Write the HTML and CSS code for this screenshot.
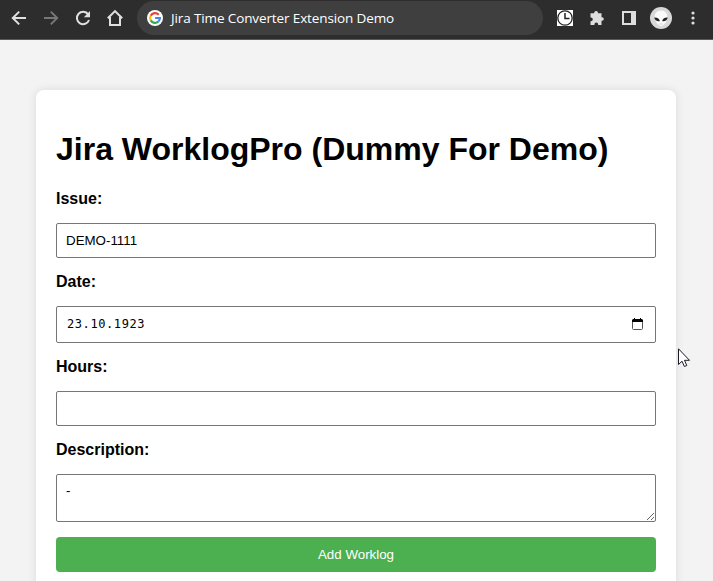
FILE: index.html
```html
<!DOCTYPE html>
<html lang="en">
<head>
<meta charset="utf-8">
<title>Jira Time Converter Extension Demo</title>
<link rel="stylesheet" href="styles.css">
</head>
<body>
<header class="toolbar">
  <nav class="nav">
    <svg width="16" height="16" viewBox="0 0 16 16" class="line"><path d="M15 8H2M8.2 1.6 1.8 8l6.4 6.4"/></svg>
    <svg width="16" height="16" viewBox="0 0 16 16" class="line dim"><path d="M1 8h13M7.8 1.6 14.2 8l-6.4 6.4"/></svg>
    <svg width="16" height="16" viewBox="0 0 16 16" class="line"><path d="M13.2 4.4A6.2 6.2 0 1 0 14 10"/><path class="solid" d="M15 1v6.2H8.8z"/></svg>
    <svg width="16" height="18" viewBox="0 0 16 18" class="line"><path d="M.8 9.3 8 2.1l7.2 7.2M3 8v8h10V8"/></svg>
  </nav>
  <div class="omnibox">
    <svg width="16" height="16" viewBox="0 0 16 16">
      <circle cx="8" cy="8" r="8" fill="#fff"/>
      <g fill="none" stroke-width="2.2">
        <path d="M11.7 4.7A4.9 4.9 0 0 0 3.7 5.7" stroke="#ea4335"/>
        <path d="M3.7 5.7a4.9 4.9 0 0 0 0 4.7" stroke="#fbbc05"/>
        <path d="M3.7 10.4a4.9 4.9 0 0 0 7.7 1.1" stroke="#34a853"/>
        <path d="M11.4 11.5A4.9 4.9 0 0 0 12.9 8H8.1" stroke="#4285f4"/>
      </g>
    </svg>
    <span class="url">Jira Time Converter Extension Demo</span>
  </div>
  <div class="tools">
    <svg class="clock" width="16" height="16" viewBox="0 0 16 16"><path fill="#fff" d="M0 0h16v16H0z"/><circle cx="8" cy="8" r="7.2" fill="#fff" stroke="#222" stroke-width="1.3"/><path d="M8 3v5.5h4.5" fill="none" stroke="#222" stroke-width="1.5"/></svg>
    <svg class="puzzle" width="16" height="16" viewBox="0 0 16 16"><path fill="#dedede" d="M1.500 3.200h3.700v-.4a1.900 1.900 0 0 1 3.800 0v.4h3.500v4h.5a1.800 1.800 0 0 1 0 3.600h-.5V15H9.200v-.6a1.900 1.900 0 0 0-3.800 0v.6H1.500v-3.800h.4a1.900 1.900 0 0 0 0-3.800h-.4z"/></svg>
    <svg class="panel" width="14" height="14" viewBox="0 0 14 14"><path fill="#dedede" fill-rule="evenodd" d="M0 0h14v14H0zM2 2v10h7V2z"/></svg>
    <svg class="avatar" width="22" height="22" viewBox="0 0 22 22"><circle cx="11" cy="11" r="11" fill="#d8d8d8"/><path fill="#fafafa" d="M11 3.500c4.300 0 6.500 3 6.300 7-.2 4-3.600 8.500-6.300 8.500s-6.100-4.500-6.300-8.500c-.2-4 2-7 6.300-7z"/><path fill="#222" d="M4.300 10.500c3-.2 5.400 1.200 5.500 3.700-3 .5-5.200-1.100-5.500-3.700zM17.700 10.500c-3-.2-5.400 1.200-5.500 3.700 3 .5 5.200-1.100 5.500-3.700z"/><path d="M9.500 17h3" stroke="#bbb" stroke-width=".7"/></svg>
    <svg class="more" width="4" height="14" viewBox="0 0 4 14" fill="#dedede"><circle cx="2" cy="2" r="1.600"/><circle cx="2" cy="7" r="1.600"/><circle cx="2" cy="12" r="1.600"/></svg>
  </div>
</header>
<main class="card">
  <h1>Jira WorklogPro (Dummy For Demo)</h1>
  <form class="form">
    <label for="issue">Issue:</label>
    <input id="issue" class="field" type="text" value="DEMO-1111">
    <label>Date:</label>
    <div class="field date">
      <span>23.10.1923</span>
      <svg width="11" height="12" viewBox="0 0 11 12"><path d="M.5 2v8.500a1 1 0 0 0 1 1h8a1 1 0 0 0 1-1V2" fill="none" stroke="#555"/><path d="M0 4V2l1-1h1V0h1v1h5V0h1v1h1l1 1v2z"/></svg>
    </div>
    <label for="hours">Hours:</label>
    <input id="hours" class="field" type="text">
    <label for="description">Description:</label>
    <textarea id="description" class="field area">-</textarea>
    <button class="submit" type="button">Add Worklog</button>
  </form>
</main>
<svg class="cursor" width="13" height="20" viewBox="0 0 13 20"><path d="M.5.800v15.700l3.500-3.300 2.400 5.300 2.400-1-2.300-5.200h5z" fill="#fff" stroke="#1a1a28"/></svg>
</body>
</html>
```
FILE: styles.css
```css
* { box-sizing: border-box; }

body {
  margin: 0;
  height: 581px;
  overflow: hidden;
  background: #f3f3f3;
  color: #000;
  font-family: "Liberation Sans", Arial, sans-serif;
}

.toolbar {
  display: flex;
  height: 40px;
  padding: 1px 0 4px 11px;
  background: #2d2d2d;
  border-bottom: 1px solid #595959;
}

.nav {
  display: flex;
  align-items: center;
  gap: 16px;
  width: 126px;
}

.line { fill: none; stroke: #e0e0e0; stroke-width: 2; }
.dim { stroke: #777; }
.solid { fill: #e0e0e0; stroke: none; }

.omnibox {
  display: flex;
  align-items: center;
  gap: 8px;
  width: 406px;
  height: 34px;
  padding-left: 10px;
  border-radius: 17px;
  background: #3f3f3f;
}

.url {
  color: #fff;
  font: 13.5px/20px "Open Sans", "Noto Sans", sans-serif;
  letter-spacing: -0.12px;
}

.tools {
  display: flex;
  align-items: center;
  padding-left: 14px;
}

.puzzle { margin-left: 16px; }
.panel { margin-left: 17px; }
.avatar { margin-left: 14px; }
.more { margin-left: 19px; }

.card {
  width: 640px;
  height: 520px;
  margin: 50px 0 0 36px;
  padding: 20px;
  border-radius: 8px;
  background: #fff;
  box-shadow: 0 0 10px rgba(0, 0, 0, 0.1);
}

h1 {
  margin: 21.44px 0;
  font-size: 32px;
  line-height: 37px;
}

.form {
  display: flex;
  flex-direction: column;
  gap: 15px;
}

label {
  font-size: 16px;
  font-weight: bold;
  line-height: 18px;
}

.field {
  width: 100%;
  height: 35px;
  margin: 0;
  padding: 8px 9px;
  border: 1px solid #767676;
  border-radius: 2px;
  background: #fff;
  color: #000;
  font: 13.333px "Liberation Sans", Arial, sans-serif;
}

.date {
  display: flex;
  align-items: center;
  justify-content: space-between;
  height: 37px;
  padding: 0 12px 0 10px;
  font: 12px "DejaVu Sans Mono", monospace;
  letter-spacing: 0.58px;
}

.area {
  height: 48px;
  resize: vertical;
}

.submit {
  height: 35px;
  padding: 0;
  border: 0;
  border-radius: 4px;
  background: #4caf50;
  color: #fff;
  font: 13.333px "Liberation Sans", Arial, sans-serif;
}

.cursor {
  position: absolute;
  left: 678px;
  top: 348px;
}
```
